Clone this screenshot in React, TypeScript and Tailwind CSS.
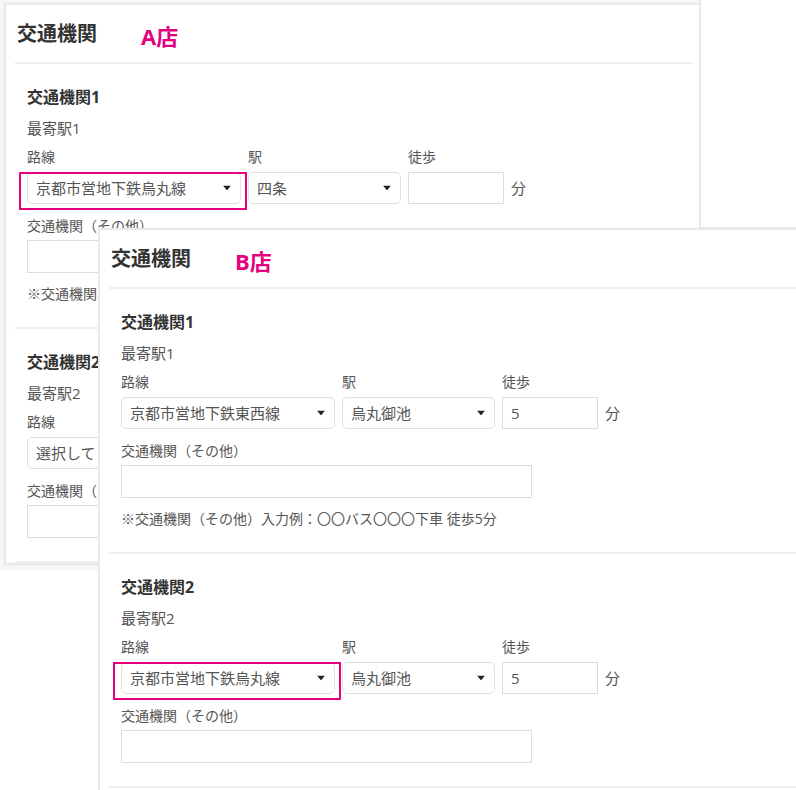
import React from 'react';

type SectionProps = {
  title: string;
  nearest: string;
  route: string;
  station: string;
  walk: string;
  highlight?: boolean;
  note?: boolean;
};

function Caret(): React.JSX.Element {
  return (
    <svg className="absolute right-[9px] top-1/2 -translate-y-1/2" width="8" height="5" viewBox="0 0 8 5">
      <path d="M0 0h8L4 5z" fill="#222" />
    </svg>
  );
}

function FakeSelect({ value, width }: { value: string; width: string }): React.JSX.Element {
  return (
    <div
      className={`relative mt-[5px] flex h-[32px] items-center rounded-[5px] border border-[#dfdfdf] bg-white pl-[8px] text-[15px] text-[#555] ${width}`}
    >
      {value}
      <Caret />
    </div>
  );
}

function Section({ title, nearest, route, station, walk, highlight, note }: SectionProps): React.JSX.Element {
  return (
    <div className="mx-[9px] border-b-2 border-[#efefef] pb-[23px] pl-[12px] pt-[22px]">
      <h3 className="h-[22px] text-[16px] font-bold leading-[22px] text-[#333]">{title}</h3>
      <p className="mt-[9px] h-[22px] text-[15px] leading-[22px] text-[#555]">{nearest}</p>

      <div className="mt-[8px] flex items-end gap-[7px]">
        <div className="relative w-[214px]">
          <div className="h-[20px] text-[14px] leading-[20px] text-[#555]">路線</div>
          <div className="relative">
            <FakeSelect value={route} width="w-[214px]" />
            {highlight && (
              <div className="absolute -bottom-[6px] -left-[8px] -right-[6px] top-0 border-2 border-[#e4007f]" />
            )}
          </div>
        </div>
        <div className="w-[153px]">
          <div className="h-[20px] text-[14px] leading-[20px] text-[#555]">駅</div>
          <FakeSelect value={station} width="w-[153px]" />
        </div>
        <div className="w-[96px]">
          <div className="h-[20px] text-[14px] leading-[20px] text-[#555]">徒歩</div>
          <div className="mt-[5px] flex h-[32px] items-center border border-[#dcdcdc] bg-white pl-[8px] text-[15px] text-[#555]">
            {walk}
          </div>
        </div>
        <span className="h-[32px] text-[15px] leading-[32px] text-[#555]">分</span>
      </div>

      <div className="mt-[12px] h-[20px] text-[14px] leading-[20px] text-[#555]">交通機関（その他）</div>
      <div className="mt-[4px] h-[33px] w-[411px] border border-[#dcdcdc] bg-white" />

      {note && (
        <p className="mt-[11px] h-[20px] text-[14px] leading-[20px] text-[#555]">
          ※交通機関（その他）入力例：〇〇バス〇〇〇下車 徒歩5分
        </p>
      )}
    </div>
  );
}

function Panel({
  shop,
  className,
  children,
}: {
  shop: string;
  className: string;
  children: React.ReactNode;
}): React.JSX.Element {
  return (
    <div className={`absolute overflow-hidden border-2 border-[#e9e9e9] bg-white shadow-[0_0_2px_rgba(0,0,0,0.06)] ${className}`}>
      <div className="flex h-[57px] items-center pl-[11px]">
        <span className="w-[124px] text-[20px] font-bold text-[#333]">交通機関</span>
        <span className="pt-[5px] text-[22px] font-bold text-[#e4007f]">{shop}</span>
      </div>
      <div className="mx-[9px] border-t-2 border-[#efefef]" />
      {children}
    </div>
  );
}

export default function App(): React.JSX.Element {
  return (
    <div className="relative h-[790px] w-[796px] overflow-hidden bg-white font-['Open_Sans','Noto_Sans_CJK_JP',sans-serif]">
      <div className="absolute left-0 top-0 h-[570px] w-[796px] bg-[#f6f6f6]" />

      {/* A店 */}
      <Panel shop="A店" className="left-[4px] top-[3px] h-[562px] w-[700px]">
        <Section
          title="交通機関1"
          nearest="最寄駅1"
          route="京都市営地下鉄烏丸線"
          station="四条"
          walk=""
          highlight
          note
        />
        <Section title="交通機関2" nearest="最寄駅2" route="選択してください" station="選択してください" walk="" />
      </Panel>

      {/* window at the right */}
      <div className="absolute left-[699px] top-[-10px] h-[239px] w-[120px] border-2 border-[#e9e9e9] bg-white" />

      {/* B店 */}
      <Panel shop="B店" className="left-[98px] top-[228px] h-[600px] w-[720px]">
        <Section
          title="交通機関1"
          nearest="最寄駅1"
          route="京都市営地下鉄東西線"
          station="烏丸御池"
          walk="5"
          note
        />
        <Section
          title="交通機関2"
          nearest="最寄駅2"
          route="京都市営地下鉄烏丸線"
          station="烏丸御池"
          walk="5"
          highlight
        />
      </Panel>
    </div>
  );
}
